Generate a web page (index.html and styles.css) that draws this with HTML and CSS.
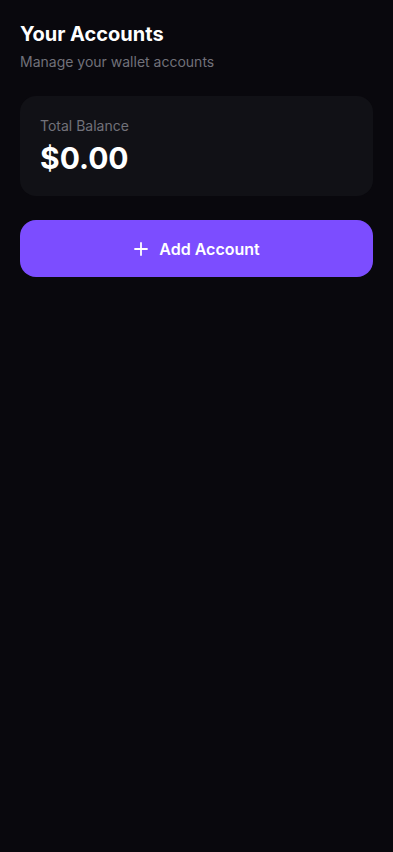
FILE: index.html
```html
<!DOCTYPE html>
<html lang="en">
<head>
    <meta charset="UTF-8">
    <meta name="viewport" content="width=device-width, initial-scale=1.0">
    <title>Your Accounts</title>
    <link rel="stylesheet" href="styles.css">
</head>
<body>

<main class="accounts-page">
    <div class="page-header">
        <h1 class="page-title">Your Accounts</h1>
        <p class="page-subtitle">Manage your wallet accounts</p>
    </div>

    <!-- Balance Card -->
    <section class="balance-card">
        <div class="balance-label">Total Balance</div>
        <div class="balance-amount">$0.00</div>
    </section>

    <button class="add-btn">
        <svg class="add-icon" width="16" height="16" viewBox="0 0 16 16" fill="none">
            <path d="M8 2v12M2 8h12" stroke="#fff" stroke-width="1.8" stroke-linecap="round"/>
        </svg>
        <span>Add Account</span>
    </button>
</main>

</body>
</html>
```

FILE: styles.css
```css
/* General Styles */
body {
    font-family: 'Inter', 'Noto Sans', sans-serif;
    background-color: #09080d;
    color: #fff;
    margin: 0;
    padding: 0;
    min-height: 100vh;
}

.accounts-page {
    padding: 20px;
}

/* Header */
.page-title {
    font-size: 20px;
    line-height: 28px;
    font-weight: 700;
    margin: 0;
}

.page-subtitle {
    font-size: 14px;
    line-height: 20px;
    color: #71717a;
    margin: 4px 0 0;
}

/* Balance Card */
.balance-card {
    margin-top: 24px;
    background: #111116;
    border-radius: 16px;
    padding: 20px;
}

.balance-label {
    font-size: 14px;
    line-height: 20px;
    color: #71717a;
}

.balance-amount {
    font-size: 30px;
    line-height: 36px;
    font-weight: 700;
    margin-top: 4px;
}

/* Add Button */
.add-btn {
    margin-top: 24px;
    width: 100%;
    height: 57px;
    border: none;
    border-radius: 16px;
    background: #7c4dff;
    color: #fff;
    font-family: inherit;
    font-size: 16px;
    font-weight: 600;
    display: flex;
    align-items: center;
    justify-content: center;
    gap: 10px;
    cursor: pointer;
}
```
